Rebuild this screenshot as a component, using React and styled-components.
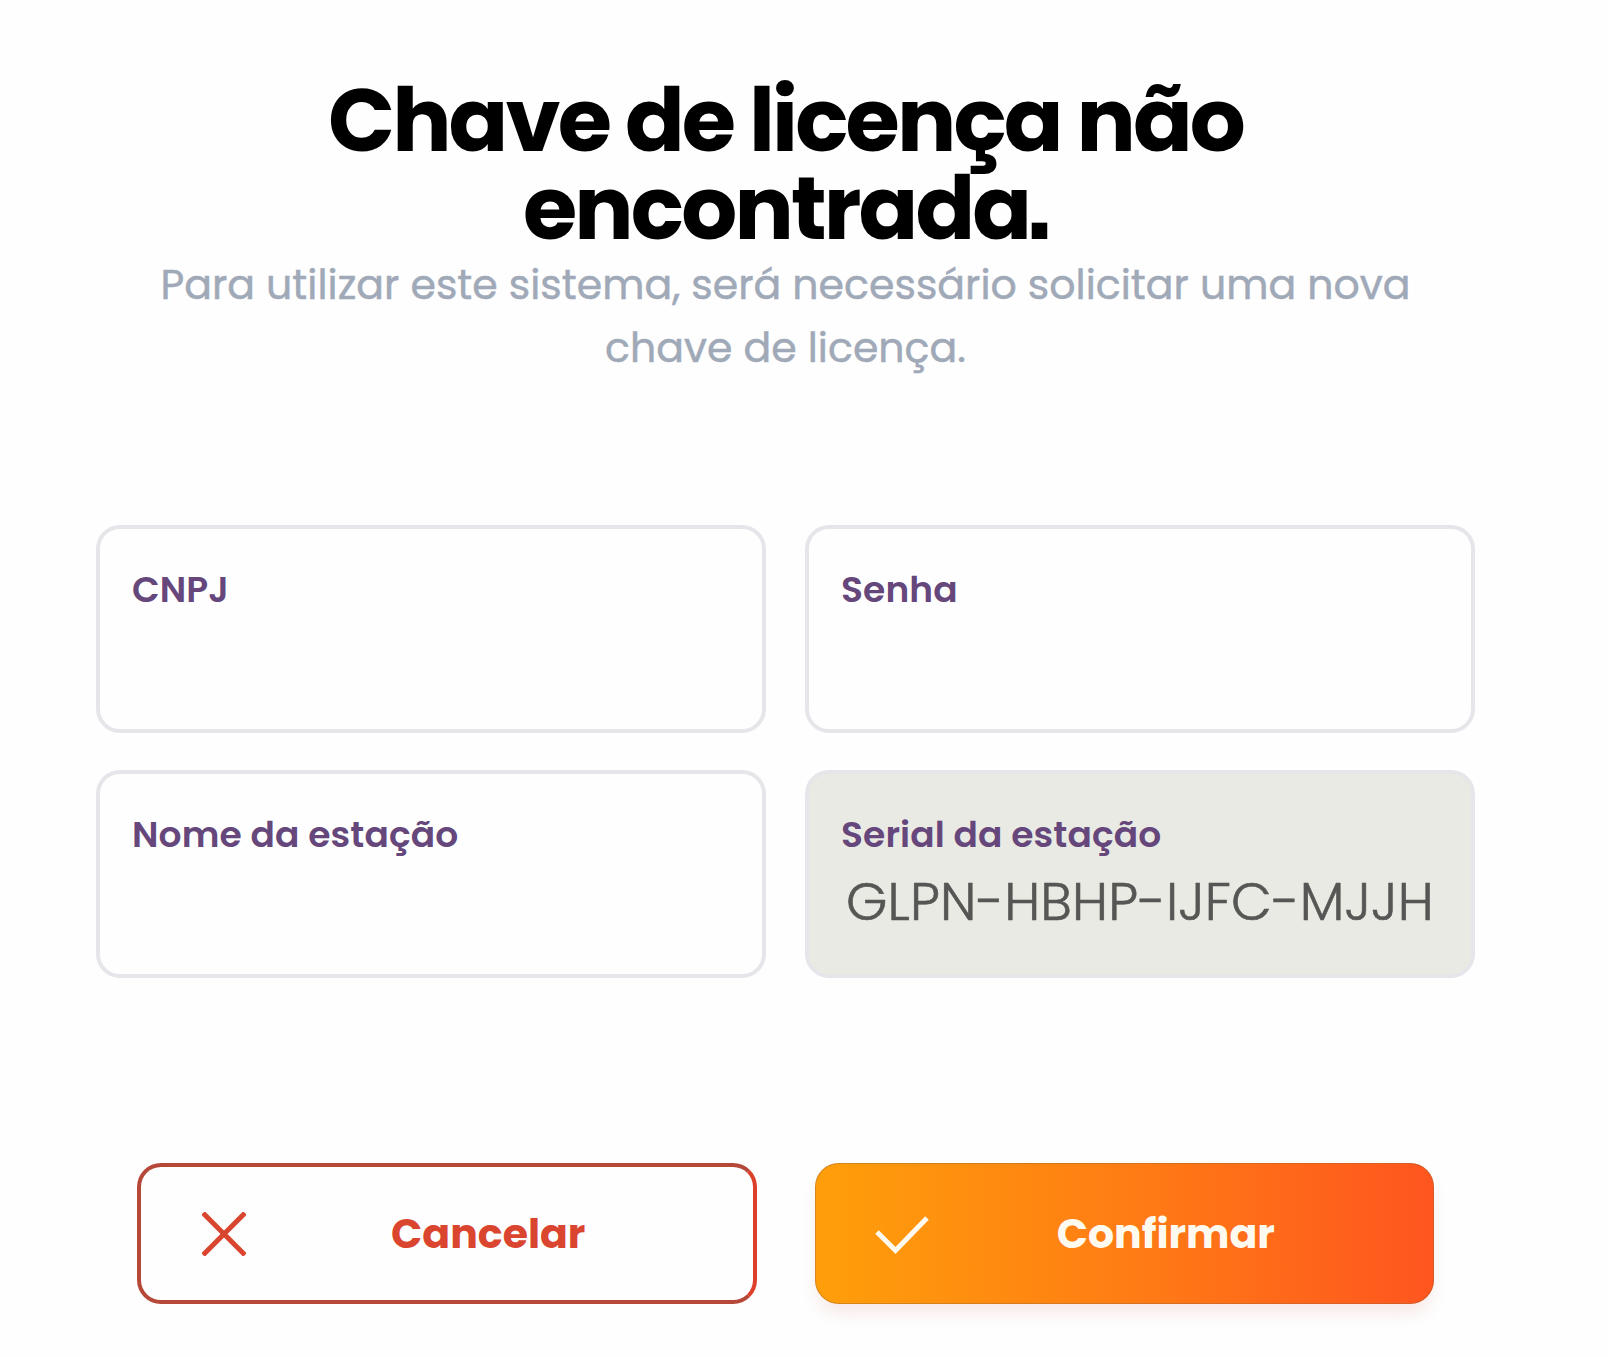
import React, { Component } from 'react'
import styled, { createGlobalStyle } from 'styled-components'

const fields = [
  { label: 'CNPJ' },
  { label: 'Senha' },
  { label: 'Nome da estação' },
  {
    label: 'Serial da estação',
    value: 'GLPN-HBHP-IJFC-MJJH',
    disabled: true
  }
]

export default class LicenseKey extends Component {
  // License request form
  render() {
    return (
      <>
        <GlobalStyle />
        <Page>
          <Title>
            Chave de licença não
            <br />
            encontrada<Period>.</Period>
          </Title>
          <Subtitle>
            Para utilizar este sistema, será necessário solicitar uma nova
            <br />
            chave de licença.
          </Subtitle>
          <Fields>
            {fields.map(({ label, value, disabled }) => (
              <Field key={label} $disabled={disabled}>
                <Label>{label}</Label>
                {value && <Value>{value}</Value>}
              </Field>
            ))}
          </Fields>
          <Actions>
            <CancelButton type='button'>
              <Icon $width={44} $left={61} viewBox='0 0 44 44'>
                <path d='M1 1L43 43M43 1L1 43' />
              </Icon>
              <ButtonText $right={22}>Cancelar</ButtonText>
            </CancelButton>
            <ConfirmButton type='button'>
              <Icon $width={54} $left={60} viewBox='0 0 54 44'>
                <path d='M2 20L20.5 38.5L52 6' />
              </Icon>
              <ButtonText $right={31}>Confirmar</ButtonText>
            </ConfirmButton>
          </Actions>
        </Page>
      </>
    )
  }
}

const GlobalStyle = createGlobalStyle`
  * {
    box-sizing: border-box;
  }
  body {
    margin: 0;
    background: #fefefe;
    font-family: Poppins, Inter, sans-serif;
    font-feature-settings: 'cv11';
  }
`

const Page = styled.main`
  width: 1571px;
  min-height: 1357px;
  padding: 77px 96px 0;
`

const Title = styled.h1`
  margin: 0;
  color: #000;
  font-size: 88px;
  font-weight: 700;
  line-height: 88px;
  letter-spacing: -2.85px;
  text-align: center;
  white-space: nowrap;
`

// squared full stop
const Period = styled.span`
  margin: 0 -4px 0 -5px;
  font-family: 'Liberation Sans', Arial, sans-serif;
  font-size: 110px;
  line-height: 0;
`

const Subtitle = styled.p`
  margin: 0;
  color: #a0a9b8;
  font-size: 41px;
  font-weight: 400;
  line-height: 63px;
  letter-spacing: 0.04px;
  text-align: center;
  white-space: nowrap;
  -webkit-text-stroke: 0.5px #a0a9b8;
`

const Fields = styled.div`
  display: grid;
  grid-template-columns: 1fr 1fr;
  grid-auto-rows: 208px;
  gap: 37px 39px;
  margin-top: 146px;
`

const Field = styled.div`
  padding: 39px 32px 0;
  border: 4px solid #e6e6ea;
  border-radius: 24px;
  background: ${({ $disabled }) => ($disabled ? '#e9eae4' : '#fefefe')};
`

const Label = styled.div`
  color: #65477c;
  font-size: 36px;
  font-weight: 600;
  line-height: 44px;
  letter-spacing: 0.12px;
  white-space: nowrap;
`

const Value = styled.div`
  margin: 15px 0 0 5px;
  color: #565755;
  font-size: 53px;
  font-weight: 300;
  line-height: 60px;
  letter-spacing: 0.14px;
  white-space: nowrap;
  -webkit-text-stroke: 0.6px #565755;
`

const Actions = styled.div`
  display: grid;
  grid-template-columns: 1fr 1fr;
  gap: 58px;
  margin: 185px 41px 0;
`

const Button = styled.button`
  display: flex;
  align-items: center;
  height: 141px;
  padding: 0;
  border-radius: 24px;
  font-family: inherit;
  font-feature-settings: inherit;
  font-size: 41px;
  font-weight: 700;
  cursor: pointer;
`

const CancelButton = styled(Button)`
  border: 4px solid #b54838;
  border-right-color: #dc3f2a;
  background: #fefefe;
  color: #d9452f;
`

const ConfirmButton = styled(Button)`
  border: 0;
  background: linear-gradient(90deg, #ff9f0a 0%, #ff7d14 50%, #ff551f 100%);
  box-shadow: 0 12px 18px -4px rgba(190, 60, 40, 0.12),
    inset 0 0 0 1px rgba(150, 100, 50, 0.4);
  color: #fffaf0;
`

const Icon = styled.svg`
  flex: none;
  width: ${({ $width }) => $width}px;
  height: 44px;
  margin-left: ${({ $left }) => $left}px;
  fill: none;
  stroke: currentColor;
  stroke-width: 5;
`

const ButtonText = styled.span`
  flex: 1;
  padding-right: ${({ $right }) => $right}px;
  line-height: 48px;
  text-align: center;
`
